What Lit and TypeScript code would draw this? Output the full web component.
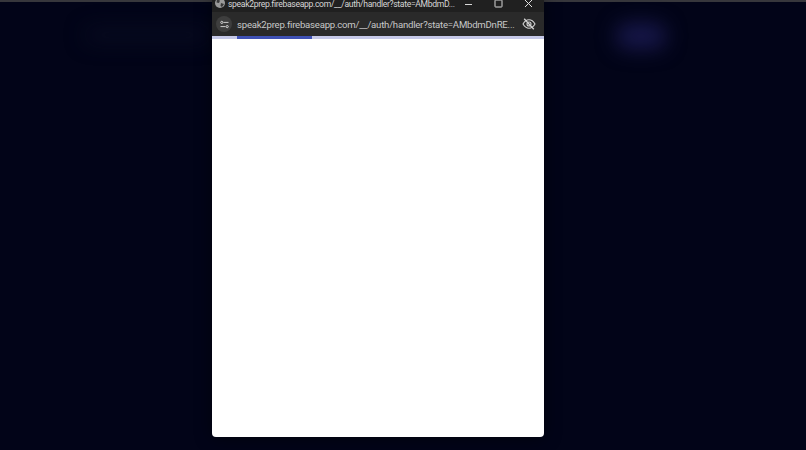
import { LitElement, html, css } from 'lit';
import { customElement } from 'lit/decorators.js';

@customElement('app-root')
export class AppRoot extends LitElement {
  static styles = css`
    :host {
      display: block;
      width: 806px;
      height: 450px;
      font-family: Roboto, 'Liberation Sans', sans-serif;
    }
    .page {
      position: relative;
      width: 806px;
      height: 450px;
      overflow: hidden;
      background: #020418;
    }
    .topline {
      height: 2px;
      background: #37373c;
    }
    /* blurred things behind the popup */
    .glow {
      position: absolute;
      border-radius: 12px;
      filter: blur(10px);
    }
    .glow.nav {
      left: 85px;
      top: 28px;
      width: 125px;
      height: 14px;
      background: #070b20;
    }
    .glow.button {
      left: 616px;
      top: 23px;
      width: 50px;
      height: 26px;
      background: #17174a;
    }
    .popup {
      position: absolute;
      left: 212px;
      top: 0;
      width: 332px;
      height: 437px;
      display: flex;
      flex-direction: column;
      border-radius: 0 0 4px 4px;
      overflow: hidden;
      background: #ffffff;
      box-shadow: 0 0 16px rgba(0, 0, 0, 0.55);
    }
    .titlebar {
      height: 12px;
      flex: none;
      display: flex;
      align-items: center;
      background: #202020;
      color: #d6d6d6;
      font-size: 8.6px;
      letter-spacing: -0.33px;
      overflow: hidden;
    }
    .globe {
      margin: -6px 3px 0 3px;
      flex: none;
    }
    .title {
      margin-top: -5px;
      width: 233px;
      flex: none;
      white-space: nowrap;
    }
    .controls {
      display: flex;
      margin-left: 3px;
      margin-top: -6px;
      gap: 21px;
      align-items: center;
    }
    .urlbar {
      height: 24px;
      flex: none;
      display: flex;
      align-items: center;
      background: #2a2a2a;
      color: #c8c8c8;
      font-size: 9.6px;
      letter-spacing: -0.23px;
    }
    .tune {
      width: 16px;
      height: 16px;
      margin-left: 4px;
      margin-right: 5px;
      border-radius: 50%;
      background: #3e3e3e;
      display: flex;
      align-items: center;
      justify-content: center;
      flex: none;
    }
    .url {
      width: 276px;
      flex: none;
      white-space: nowrap;
    }
    .eye {
      margin-left: 9px;
      flex: none;
    }
    .progress {
      height: 3px;
      flex: none;
      background: #c5c8e8;
    }
    .progress div {
      margin-left: 25px;
      width: 75px;
      height: 100%;
      background: #3f51b5;
    }
  `;

  render() {
    const title = 'speak2prep.firebaseapp.com/__/auth/handler?state=AMbdmD...';
    const url = 'speak2prep.firebaseapp.com/__/auth/handler?state=AMbdmDnRE...';
    return html`
      <div class="page">
        <div class="topline"></div>
        <div class="glow nav"></div>
        <div class="glow button"></div>
        <div class="popup">
          <div class="titlebar">
            <svg class="globe" width="10" height="10" viewBox="0 0 10 10">
              <circle cx="5" cy="5" r="5" fill="#9a9a9a" />
              <path d="M2 1.5 L5 2.5 L4 5 L1.5 4.5 Z M6 5 L9 6 L7 9 L5.5 8 Z" fill="#3a3a3a" />
            </svg>
            <span class="title">${title}</span>
            <div class="controls">
              <svg width="9" height="9" viewBox="0 0 9 9">
                <path d="M1 5.5 H8" stroke="#d8d8d8" stroke-width="1" />
              </svg>
              <svg width="9" height="9" viewBox="0 0 9 9">
                <rect x="1" y="1" width="7" height="7" rx="0.5" fill="none" stroke="#d8d8d8" stroke-width="1" />
              </svg>
              <svg width="9" height="9" viewBox="0 0 9 9">
                <path d="M1 1 L8 8 M8 1 L1 8" stroke="#e0e0e0" stroke-width="1" />
              </svg>
            </div>
          </div>
          <div class="urlbar">
            <div class="tune">
              <svg width="9" height="9" viewBox="0 0 9 9" fill="none" stroke="#dcdcdc" stroke-width="0.9">
                <path d="M3.5 2.4 H8.5 M0.5 6.6 H5.5" />
                <circle cx="1.8" cy="2.4" r="1.1" />
                <circle cx="7.2" cy="6.6" r="1.1" />
              </svg>
            </div>
            <span class="url">${url}</span>
            <svg class="eye" width="14" height="14" viewBox="0 0 14 14" fill="none" stroke="#d4d4d4" stroke-width="1.1">
              <path d="M1 7 C3 3.6 5 2.8 7 2.8 C9 2.8 11 3.6 13 7 C11 10.4 9 11.2 7 11.2 C5 11.2 3 10.4 1 7 Z" />
              <circle cx="7" cy="7" r="2" />
              <path d="M2.2 1.8 L11.8 12.2" stroke-width="1.3" />
            </svg>
          </div>
          <div class="progress"><div></div></div>
        </div>
      </div>
    `;
  }
}
